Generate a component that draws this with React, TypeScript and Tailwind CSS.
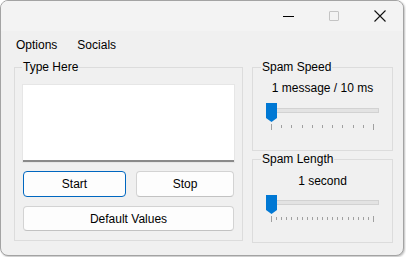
import React from 'react'

const font = { fontFamily: '"Liberation Sans", Arial, sans-serif' }

function Slider({ ticks }: { ticks: number }) {
  const x0 = 5.5
  const x1 = 107.5
  const step = (x1 - x0) / (ticks - 1)
  return (
    <svg width="113" height="32" viewBox="0 0 113 32" className="block">
      <rect x="10.5" y="8.5" width="102" height="4" fill="#e3e3e3" stroke="#d2d2d2" />
      {Array.from({ length: ticks }).map((_, i) => {
        const x = Math.round(x0 + i * step - 0.5) + 0.5
        const edge = i === 0 || i === ticks - 1
        return <line key={i} x1={x} x2={x} y1={edge ? 24 : 25} y2={edge ? 30 : 28} stroke="#a0a0a0" strokeWidth="1" />
      })}
      <path d="M0 3 H11 V18 L5.5 22 L0 18 Z" fill="#0078d4" />
    </svg>
  )
}

export default function App() {
  return (
    <div className="w-[406px] h-[257px] bg-white text-[12px] text-black" style={font}>
      <div className="w-[404px] h-[256px] rounded-[8px] border border-[#a3a3a3] overflow-hidden bg-[#f0f0f0] shadow-[1px_1px_2px_rgba(0,0,0,0.25)] flex flex-col">
        <div className="h-[30px] bg-[#f3f3f3] flex justify-end">
          <div className="w-[46px] flex items-center justify-center">
            <div className="w-[11px] h-px bg-black" />
          </div>
          <div className="w-[46px] flex items-center justify-center">
            <div className="w-[10px] h-[10px] border border-[#c4c4c4] rounded-[1px]" />
          </div>
          <div className="w-[46px] flex items-center justify-center">
            <svg width="12" height="12" viewBox="0 0 12 12">
              <path d="M0.5 0.5 L11.5 11.5 M11.5 0.5 L0.5 11.5" stroke="#111" strokeWidth="1.1" />
            </svg>
          </div>
        </div>
        <div className="h-[27px] flex items-center gap-[20px] pl-[15px] pt-[1px]">
          <span>Options</span>
          <span>Socials</span>
        </div>
        <div className="flex gap-[9px] pl-[13px] pt-[2px]">
          <fieldset className="w-[229px] h-[181px] border border-[#dcdcdc] px-[8px]">
            <legend className="px-[1px] -ml-[1px] leading-[14px]">Type Here</legend>
            <div className="mt-[11px] h-[77px] bg-white border-b-2 border-[#8a8a8a] shadow-[0_0_0_1px_#e6e6e6]" />
            <div className="mt-[9px] flex gap-[10px]">
              <button className="w-[103px] h-[26px] rounded-[4px] bg-[#fdfdfd] border border-[#0067c0]">Start</button>
              <button className="w-[98px] h-[26px] rounded-[4px] bg-[#fdfdfd] border border-[#d3d3d3] border-b-[#c2c2c2]">Stop</button>
            </div>
            <button className="mt-[9px] w-[211px] h-[25px] rounded-[4px] bg-[#fdfdfd] border border-[#d3d3d3] border-b-[#c2c2c2]">Default Values</button>
          </fieldset>
          <div className="flex flex-col gap-[1px]">
            <fieldset className="w-[141px] h-[91px] border border-[#dcdcdc] px-[13px] min-w-0">
              <legend className="px-[1px] -ml-[5px] leading-[14px]">Spam Speed</legend>
              <div className="mt-[7px] text-center leading-[14px]">1 message / 10 ms</div>
              <div className="mt-[5px]">
                <Slider ticks={11} />
              </div>
            </fieldset>
            <fieldset className="w-[141px] h-[91px] border border-[#dcdcdc] px-[13px] min-w-0">
              <legend className="px-[1px] -ml-[5px] leading-[14px]">Spam Length</legend>
              <div className="mt-[8px] text-center leading-[14px]">1 second</div>
              <div className="mt-[4px]">
                <Slider ticks={21} />
              </div>
            </fieldset>
          </div>
        </div>
      </div>
    </div>
  )
}
